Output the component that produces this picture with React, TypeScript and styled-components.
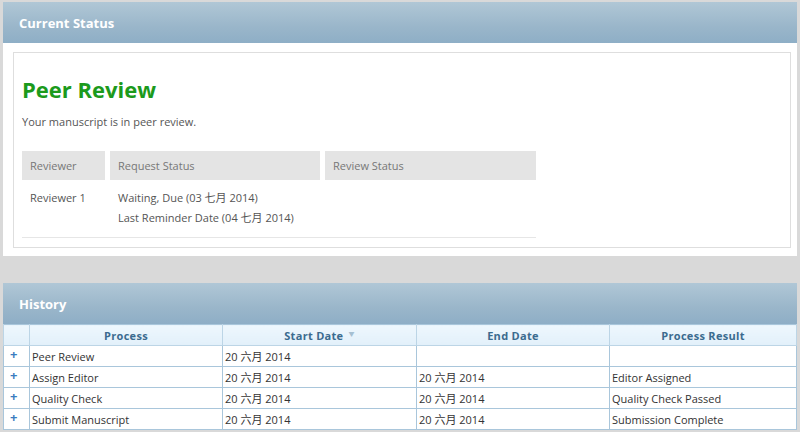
import styled, { createGlobalStyle } from "styled-components";

const GlobalStyle = createGlobalStyle`
    html, body {
        margin: 0;
        padding: 0;
        background: #d9d9d9;
        font-family: "Open Sans", "Noto Sans CJK SC", sans-serif;
        font-size: 11px;
        color: #444;
    }
`;

const Page = styled.div`
    padding: 2px 3px 0 3px;
    display: flex;
    flex-direction: column;
    gap: 27px;
`;

const Panel = styled.section`
    background: #fff;
`;

const PanelHeader = styled.div`
    height: 41px;
    display: flex;
    align-items: center;
    padding-left: 16px;
    background: linear-gradient(to bottom, #b0c7d6 0%, #9ab6ca 60%, #8eaec6 100%);
    color: #fff;
    font-size: 13px;
    font-weight: 700;
`;

const PanelBody = styled.div`
    padding: 9px 6px 8px 10px;
`;

const StatusBox = styled.div`
    border: 1px solid #dedede;
    padding: 21px 8px 9px 8px;
`;

const StageTitle = styled.h1`
    margin: 0;
    color: #1c9a1c;
    font-size: 22px;
    font-weight: 700;
    line-height: 30px;
`;

const StageNote = styled.p`
    margin: 10px 0 22px 0;
    color: #555;
    font-size: 11px;
`;

const ReviewFrame = styled.div`
    width: 514px;
    border-bottom: 1px solid #e6e6e6;
`;

const ReviewTable = styled.table`
    width: 524px;
    margin: 0 -5px;
    border-collapse: separate;
    border-spacing: 5px 0;
`;

const ReviewHead = styled.th<{ $w?: number }>`
    width: ${(p) => (p.$w ? `${p.$w}px` : "auto")};
    height: 29px;
    background: #e4e4e4;
    color: #777;
    font-weight: 400;
    text-align: left;
    padding: 0 8px;
`;

const ReviewCell = styled.td`
    vertical-align: top;
    padding: 8px 0 9px 8px;
    color: #555;
    line-height: 20px;
`;

const HistoryTable = styled.table`
    width: 100%;
    border-collapse: collapse;
    border: 1px solid #a9c6db;
`;

const HistoryHead = styled.th<{ $w?: number }>`
    width: ${(p) => (p.$w ? `${p.$w}px` : "auto")};
    height: 20px;
    padding: 0;
    background: linear-gradient(to bottom, #eef7fd, #e2f0fa);
    border: 1px solid #bcd5e6;
    border-top: none;
    color: #3b6b8f;
    font-weight: 700;
    font-size: 11px;
    letter-spacing: 0.3px;
`;

const SortCaret = styled.span`
    color: #a6c0d2;
    font-size: 6px;
    margin-left: 5px;
    vertical-align: 4px;
`;

const HistoryCell = styled.td`
    height: 20px;
    padding: 0 2px;
    border: 1px solid #a9c6db;
    color: #333;
    font-size: 11px;
`;

const ExpandCell = styled(HistoryCell)`
    color: #3a7cc0;
    font-weight: 700;
    font-size: 13px;
    text-align: left;
    padding-left: 6px;
    vertical-align: top;
    line-height: 16px;
`;

const history = [
    { process: "Peer Review", start: "20 六月 2014", end: "", result: "" },
    { process: "Assign Editor", start: "20 六月 2014", end: "20 六月 2014", result: "Editor Assigned" },
    { process: "Quality Check", start: "20 六月 2014", end: "20 六月 2014", result: "Quality Check Passed" },
    { process: "Submit Manuscript", start: "20 六月 2014", end: "20 六月 2014", result: "Submission Complete" },
];

export default function App() {
    return (
        <>
            <GlobalStyle />
            <Page>
                <Panel>
                    <PanelHeader>Current Status</PanelHeader>
                    <PanelBody>
                        <StatusBox>
                            <StageTitle>Peer Review</StageTitle>
                            <StageNote>Your manuscript is in peer review.</StageNote>
                            <ReviewFrame>
                                <ReviewTable>
                                    <thead>
                                        <tr>
                                            <ReviewHead $w={67}>Reviewer</ReviewHead>
                                            <ReviewHead $w={194}>Request Status</ReviewHead>
                                            <ReviewHead>Review Status</ReviewHead>
                                        </tr>
                                    </thead>
                                    <tbody>
                                        <tr>
                                            <ReviewCell>Reviewer 1</ReviewCell>
                                            <ReviewCell>
                                                Waiting, Due (03 七月 2014)
                                                <br />
                                                Last Reminder Date (04 七月 2014)
                                            </ReviewCell>
                                            <ReviewCell />
                                        </tr>
                                    </tbody>
                                </ReviewTable>
                            </ReviewFrame>
                        </StatusBox>
                    </PanelBody>
                </Panel>
                <Panel>
                    <PanelHeader>History</PanelHeader>
                    <HistoryTable>
                        <thead>
                            <tr>
                                <HistoryHead $w={25} />
                                <HistoryHead $w={192}>Process</HistoryHead>
                                <HistoryHead $w={193}>
                                    Start Date<SortCaret>▼</SortCaret>
                                </HistoryHead>
                                <HistoryHead $w={192}>End Date</HistoryHead>
                                <HistoryHead>Process Result</HistoryHead>
                            </tr>
                        </thead>
                        <tbody>
                            {history.map((row) => (
                                <tr key={row.process}>
                                    <ExpandCell>+</ExpandCell>
                                    <HistoryCell>{row.process}</HistoryCell>
                                    <HistoryCell>{row.start}</HistoryCell>
                                    <HistoryCell>{row.end}</HistoryCell>
                                    <HistoryCell>{row.result}</HistoryCell>
                                </tr>
                            ))}
                        </tbody>
                    </HistoryTable>
                </Panel>
            </Page>
        </>
    );
}
